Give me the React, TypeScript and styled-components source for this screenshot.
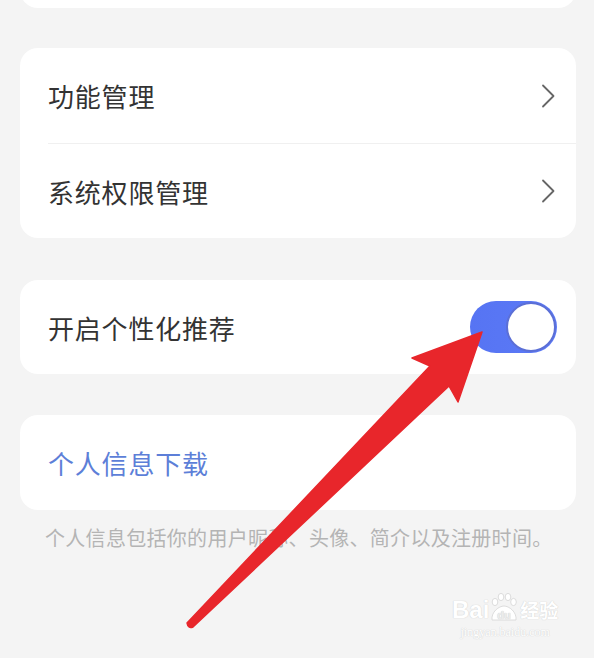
import React from "react";
import styled, { createGlobalStyle } from "styled-components";

const GlobalStyle = createGlobalStyle`
  html, body {
    margin: 0;
    padding: 0;
    background: #f4f4f4;
  }
  body {
    font-family: "Noto Sans CJK SC", "Noto Sans", sans-serif;
  }
`;

const Page = styled.div`
  position: relative;
  width: 594px;
  height: 658px;
  overflow: hidden;
  background: #f4f4f4;
  box-sizing: border-box;
  padding: 0 18px 0 20px;
  display: flex;
  flex-direction: column;
`;

const Card = styled.div<{ $gap?: number }>`
  background: #ffffff;
  border-radius: 18px;
  margin-top: ${(p) => p.$gap ?? 0}px;
  display: flex;
  flex-direction: column;
  overflow: hidden;
`;

const TopCard = styled(Card)`
  height: 40px;
  margin-top: -32px;
  flex-shrink: 0;
`;

const Row = styled.div<{ $h?: number }>`
  height: ${(p) => p.$h ?? 95}px;
  display: flex;
  align-items: center;
  justify-content: space-between;
  padding: 0 19px 0 28px;
`;

const Label = styled.span<{ $link?: boolean }>`
  font-size: 26px;
  color: ${(p) => (p.$link ? "#5d7fd8" : "#333333")};
  letter-spacing: 0.8px;
`;

const Divider = styled.div`
  height: 1px;
  margin-left: 28px;
  background: #f0f0f0;
`;

const Chevron = styled.svg`
  width: 14px;
  height: 24px;
  margin-right: 2px;
`;

const Toggle = styled.div<{ $on: boolean }>`
  width: 87px;
  height: 52px;
  border-radius: 26px;
  background: ${(p) =>
    p.$on ? "linear-gradient(90deg, #5674f3 0%, #5c7af6 100%)" : "#dcdcdc"};
  display: flex;
  align-items: center;
  justify-content: ${(p) => (p.$on ? "flex-end" : "flex-start")};
  padding: 0 1px;
  box-sizing: border-box;
`;

const Knob = styled.div`
  width: 46px;
  height: 46px;
  border-radius: 50%;
  background: #ffffff;
  border: 2px solid #5b6fd6;
`;

const Caption = styled.p`
  margin: 14px 0 0 25px;
  font-size: 20px;
  line-height: 28px;
  color: #b4b4b4;
  letter-spacing: 0.3px;
`;

const Overlay = styled.svg`
  position: absolute;
  left: 0;
  top: 0;
  width: 594px;
  height: 658px;
  pointer-events: none;
`;

const Watermark = styled.div`
  position: absolute;
  left: 452px;
  top: 592px;
  display: flex;
  flex-direction: column;
  align-items: center;
  white-space: nowrap;
  color: #ffffff;
  text-shadow: 0 0 1px #d4d4d4, 0 0 1px #d4d4d4;
`;

const MarkLine = styled.div`
  display: flex;
  align-items: flex-end;
  font-family: "Liberation Sans", sans-serif;
  font-size: 24px;
  font-weight: bold;
  line-height: 24px;
`;

const MarkCn = styled.span`
  font-family: "Noto Sans CJK SC", sans-serif;
  font-size: 19px;
  line-height: 24px;
  font-weight: 700;
  margin-left: 1px;
`;

const MarkUrl = styled.div`
  font-family: "Liberation Serif", serif;
  font-size: 12px;
  line-height: 14px;
  margin-top: 3px;
`;

const ChevronIcon = () => (
  <Chevron viewBox="0 0 14 24">
    <path d="M2 1.5 L12.5 12 L2 22.5" fill="none" stroke="#666666" strokeWidth="1.8" strokeLinecap="round" strokeLinejoin="round" />
  </Chevron>
);

const Paw = () => (
  <svg width="30" height="30" viewBox="0 0 30 30" style={{ flexShrink: 0 }}>
    <g fill="#ffffff" stroke="#d4d4d4" strokeWidth="0.8">
      <ellipse cx="6" cy="10" rx="2.8" ry="3.6" />
      <ellipse cx="12" cy="5" rx="2.8" ry="3.6" />
      <ellipse cx="19" cy="5" rx="2.8" ry="3.6" />
      <ellipse cx="24.5" cy="10" rx="2.8" ry="3.6" />
      <path d="M3 28 C2 20 10 14 15 14 C20 14 28 20 27 28 Z" />
    </g>
    <text x="15" y="27" textAnchor="middle" fontFamily="Liberation Sans, sans-serif" fontSize="11" fontWeight="bold" fill="#ececec">du</text>
  </svg>
);

export default function App() {
  return (
    <>
      <GlobalStyle />
      <Page>
        <TopCard />
        <Card $gap={40}>
          <Row>
            <Label>功能管理</Label>
            <ChevronIcon />
          </Row>
          <Divider />
          <Row $h={94}>
            <Label>系统权限管理</Label>
            <ChevronIcon />
          </Row>
        </Card>
        <Card $gap={42}>
          <Row $h={94}>
            <Label>开启个性化推荐</Label>
            <Toggle $on>
              <Knob />
            </Toggle>
          </Row>
        </Card>
        <Card $gap={41}>
          <Row>
            <Label $link>个人信息下载</Label>
          </Row>
        </Card>
        <Caption>个人信息包括你的用户昵称、头像、简介以及注册时间。</Caption>

        <Watermark>
          <MarkLine>
            Bai
            <Paw />
            <MarkCn>经验</MarkCn>
          </MarkLine>
          <MarkUrl>jingyan.baidu.com</MarkUrl>
        </Watermark>

        <Overlay viewBox="0 0 594 658">
          <path
            d="M482 332 L412 358 L430 366 L187 623 Q188 629 193 627 L449 386 L458 402 Z"
            fill="#e8262b"
            stroke="#e8262b"
            strokeWidth="1.5"
            strokeLinejoin="round"
          />
        </Overlay>
      </Page>
    </>
  );
}
